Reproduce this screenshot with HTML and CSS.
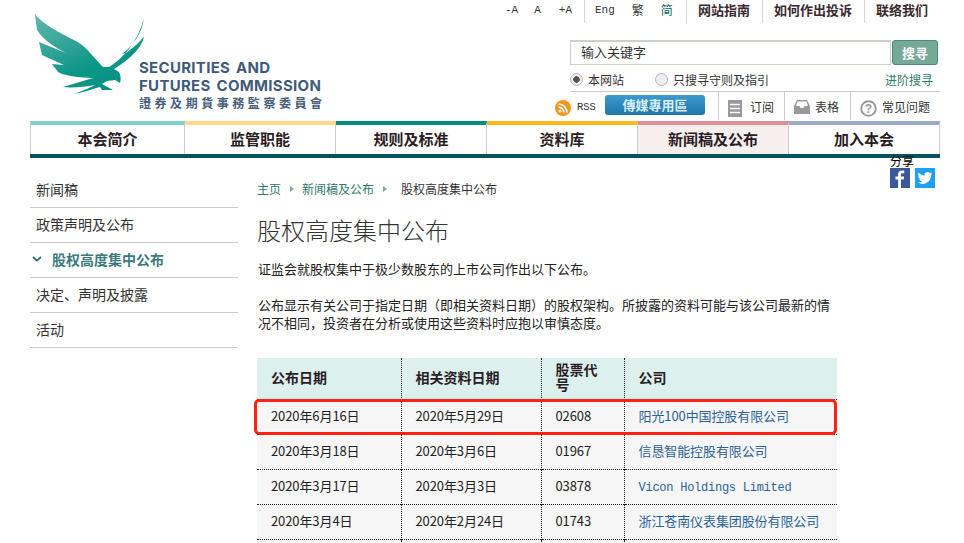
FILE: index.html
```html
<!DOCTYPE html>
<html lang="zh-CN">
<head>
<meta charset="utf-8">
<title>股权高度集中公布</title>
<link rel="stylesheet" href="styles.css">
</head>
<body>
<div class="page">
  <header class="header">
    <a class="logo">
      <svg class="eagle" width="115" height="85" viewBox="30 10 115 85">
        <defs>
          <linearGradient id="eg" x1="0.1" y1="0" x2="0.6" y2="0.9">
            <stop offset="0" stop-color="#5fb5ab"/>
            <stop offset="0.75" stop-color="#0c9686"/>
            <stop offset="1" stop-color="#079384"/>
          </linearGradient>
        </defs>
        <path fill="url(#eg)" d="M35 14C42 24 60 33 76 41C87 47 94 58 103 67L109 67C122 59 137 44 144 18C142 33 134 45 122 54L126 53C133 48 140 42 144 36C143 46 131 59 114 69L119 72C121 76 121 79 120 83L115 80L107 81L102 84L113 90L102 90L100 87C90 90 84 92 74 94C82 91 90 88 95 85C84 87 72 88 63 87L93 78C80 78 62 75 58 72L52 64L64 65C56 61 48 58 42 55L39 42L66 53C52 46 42 38 37 30Z"/>
      </svg>
      <span class="logo-text">
        <span class="logo-en">SECURITIES AND<br>FUTURES COMMISSION</span>
        <span class="logo-zh">證券及期貨事務監察委員會</span>
      </span>
    </a>
    <div class="head-right">
      <nav class="util">
        <div class="util-group sizes"><a>-A</a><a>A</a><a>+A</a></div>
        <div class="util-group langs"><a>Eng</a><a>繁</a><a class="cur">简</a></div>
        <a class="util-link">网站指南</a>
        <a class="util-link">如何作出投诉</a>
        <a class="util-link">联络我们</a>
      </nav>
      <div class="search">
        <div class="search-input">输入关键字</div>
        <button class="search-btn">搜寻</button>
      </div>
      <div class="options">
        <span class="radio on"></span><span class="opt opt-a">本网站</span>
        <span class="radio"></span><span class="opt">只搜寻守则及指引</span>
        <a class="adv">进阶搜寻</a>
      </div>
      <div class="tools">
        <svg class="rss" width="16" height="16" viewBox="0 0 16 16"><circle cx="8" cy="8" r="8" fill="#f7941e"/><circle cx="5" cy="11" r="1.5" fill="#fff"/><path d="M3.5 7.2a5.3 5.3 0 0 1 5.3 5.3M3.5 4a8.5 8.5 0 0 1 8.5 8.5" fill="none" stroke="#fff" stroke-width="1.7"/></svg>
        <span class="rss-text">RSS</span>
        <a class="media">傳媒專用區</a>
        <a class="tool t1"><svg width="14" height="17" viewBox="0 0 14 17"><rect width="14" height="17" fill="#999"/><path d="M2 4.5h10M2 8.5h10M2 12.5h10" stroke="#fff" stroke-width="1.3"/></svg><span>订阅</span></a>
        <a class="tool t2"><svg width="16" height="14" viewBox="0 0 16 14"><path d="M3 0h10l3 6v8H0V6z" fill="#999"/><path d="M3.5 1.5h9L14 6h-3.5l-1 2h-3l-1-2H2z" fill="#fff"/></svg><span>表格</span></a>
        <a class="tool t3"><svg width="17" height="17" viewBox="0 0 17 17"><circle cx="8.5" cy="8.5" r="7.3" fill="none" stroke="#999" stroke-width="2"/><text x="8.5" y="12.6" class="qm">?</text></svg><span>常见问题</span></a>
      </div>
    </div>
  </header>

  <nav class="mainnav">
    <a class="c1">本会简介</a>
    <a class="c2">监管职能</a>
    <a class="c3">规则及标准</a>
    <a class="c4">资料库</a>
    <a class="c5 cur">新闻稿及公布</a>
    <a class="c6">加入本会</a>
  </nav>

  <div class="share">
    <div class="share-label">分享</div>
    <div class="share-icons">
      <svg width="20" height="20" viewBox="0 0 20 20"><rect width="20" height="20" fill="#3b5998"/><path d="M11 20v-8.500h2.700l.4-3H11V6.700c0-.9.3-1.400 1.500-1.400h1.700V2.600c-.4 0-1.300-.1-2.300-.1-2.300 0-3.800 1.400-3.800 3.900v2.100H5.500v3h2.600V20z" fill="#fff"/></svg>
      <svg width="20" height="20" viewBox="0 0 20 20"><rect width="20" height="20" fill="#1da1f2"/><path d="M17 5.300c-.5.200-1.100.4-1.700.5.600-.4 1-.9 1.300-1.600-.6.300-1.200.6-1.900.7a3 3 0 0 0-5.100 2.700C7.200 7.500 5 6.300 3.600 4.500c-.8 1.400-.4 3.100.9 4-.5 0-.9-.1-1.300-.4 0 1.400 1 2.700 2.400 3-.4.100-.9.100-1.300 0 .4 1.200 1.500 2 2.800 2.100A6 6 0 0 1 3 14.500 8.500 8.500 0 0 0 16.100 7c.4-.5.700-1.100.9-1.700z" fill="#fff"/></svg>
    </div>
  </div>

  <div class="content">
    <aside class="side">
      <a>新闻稿</a>
      <a>政策声明及公布</a>
      <a class="active"><svg class="chev" width="10" height="6" viewBox="0 0 10 6"><path d="M1 1l4 3.500L9 1" fill="none" stroke="#2f7471" stroke-width="1.800"/></svg>股权高度集中公布</a>
      <a>决定、声明及披露</a>
      <a>活动</a>
    </aside>
    <main class="main">
      <div class="crumbs">
        <a>主页</a><i class="tri"></i><a>新闻稿及公布</a><i class="tri t-last"></i><span>股权高度集中公布</span>
      </div>
      <h1>股权高度集中公布</h1>
      <p class="p1">证监会就股权集中于极少数股东的上市公司作出以下公布。</p>
      <p class="p2">公布显示有关公司于指定日期（即相关资料日期）的股权架构。所披露的资料可能与该公司最新的情况不相同，投资者在分析或使用这些资料时应抱以审慎态度。</p>
      <div class="table-wrap">
        <table>
          <thead>
            <tr><th class="w1">公布日期</th><th class="w2">相关资料日期</th><th class="w3">股票代号</th><th>公司</th></tr>
          </thead>
          <tbody>
            <tr><td>2020年6月16日</td><td>2020年5月29日</td><td>02608</td><td><a>阳光100中国控股有限公司</a></td></tr>
            <tr><td>2020年3月18日</td><td>2020年3月6日</td><td>01967</td><td><a>信恳智能控股有限公司</a></td></tr>
            <tr><td>2020年3月17日</td><td>2020年3月3日</td><td>03878</td><td><a class="mono">Vicon Holdings Limited</a></td></tr>
            <tr><td>2020年3月4日</td><td>2020年2月24日</td><td>01743</td><td><a>浙江苍南仪表集团股份有限公司</a></td></tr>
            <tr><td>&nbsp;</td><td></td><td></td><td></td></tr>
          </tbody>
        </table>
        <div class="redbox"></div>
      </div>
    </main>
  </div>
</div>
</body>
</html>
```
FILE: styles.css
```css
* { box-sizing: border-box; }
html { overflow: hidden; height: 543px; }
body {
  margin: 0;
  height: 543px;
  overflow: hidden;
  background: #fff;
  color: #222;
  font-family: "Noto Sans CJK SC", "Liberation Sans", sans-serif;
  font-size: 13px;
}
.page { width: 910px; margin-left: 30px; position: relative; }

/* header */
.header { display: flex; justify-content: space-between; height: 121px; }
.logo { display: flex; align-items: flex-start; padding: 10px 0 0 0; }
.eagle { display: block; flex: none; }
.logo-text { display: flex; flex-direction: column; margin: 49px 0 0 -6px; }
.logo-en {
  font-family: "Inter", "Liberation Sans", sans-serif;
  font-weight: 700;
  font-size: 15px;
  line-height: 17.5px;
  color: #3f5b7a;
  letter-spacing: 0.3px;
  word-spacing: 2px;
  white-space: nowrap;
}
.logo-zh {
  font-family: "Noto Sans CJK TC", sans-serif;
  font-weight: 700;
  font-size: 12px;
  line-height: 14px;
  letter-spacing: 3.55px;
  color: #46607c;
  margin-top: 2px;
  white-space: nowrap;
}
.head-right { width: 450px; flex: none; display: flex; flex-direction: column; align-items: flex-end; }

.util { display: flex; width: 450px; height: 24px; align-items: flex-start; line-height: 20px; font-size: 12px; color: #333; white-space: nowrap; }
.util-group { display: flex; flex: none; height: 23px; border-right: 1px solid #d6d6d6; }
.sizes { width: 95px; font-family: "Liberation Mono", monospace; font-size: 11px; }
.sizes a:nth-child(1) { margin: 0 0 0 15px; }
.sizes a:nth-child(2) { margin-left: 16px; }
.sizes a:nth-child(3) { margin-left: 18px; }
.langs { width: 102px; }
.langs a:nth-child(1) { margin-left: 10px; font-family: "Liberation Mono", monospace; font-size: 11px; }
.langs a:nth-child(2) { margin-left: 17px; }
.langs a:nth-child(3) { margin-left: 17px; }
.langs .cur { color: #0b6b66; }
.util-link {
  flex: none;
  height: 23px;
  padding: 0 12px 0 11px;
  font-weight: 700;
  font-size: 13px;
  color: #3a2a30;
  border-right: 1px solid #d6d6d6;
}
.util-link:last-child { border-right: 0; padding-right: 0; }

.search { width: 370px; display: flex; margin-top: 16px; height: 25px; gap: 1px; padding-right: 2px; }
.search-input {
  flex: 1;
  border: 1px solid #c8d2c6;
  border-top-width: 2px;
  padding-left: 10px;
  line-height: 20px;
  font-size: 13px;
  color: #333;
}
.search-btn {
  width: 46px;
  height: 25px;
  padding: 0;
  border: 1px solid #4e8a78;
  border-radius: 3px;
  background: #76a996;
  color: #fff;
  font: 700 13px "Noto Sans CJK SC", sans-serif;
}

.options {
  width: 370px;
  height: 27px;
  padding-top: 5px;
  display: flex;
  align-items: flex-start;
  border-bottom: 1px solid #ccc;
  line-height: 20px;
  font-size: 12px;
  color: #333;
}
.radio {
  width: 13px;
  height: 13px;
  margin: 3px 5px 0 0;
  border-radius: 50%;
  border: 1px solid #b5b5b5;
  background: #eee;
  flex: none;
}
.radio.on { background: radial-gradient(circle, #555 0 3px, #eee 3.5px); }
.opt-a { width: 67px; }
.adv { margin-left: auto; margin-right: 7px; color: #2f7a6c; }

.tools { width: 385px; height: 28px; display: flex; align-items: flex-start; }
.rss { margin-top: 8px; flex: none; }
.rss-text { margin: 5px 0 0 6px; font-family: "Liberation Mono", monospace; font-size: 10.5px; line-height: 20px; width: 28px; color: #333; }
.media {
  width: 100px;
  height: 20px;
  margin-top: 3px;
  border-radius: 3px;
  background: linear-gradient(#3d9bd0, #1f76a5);
  color: #d9eef8;
  text-align: center;
  font-weight: 700;
  font-size: 13px;
  line-height: 19px;
}
.tool { height: 28px; display: flex; align-items: flex-start; border-left: 1px solid #ccc; color: #333; font-size: 12px; line-height: 20px; }
.tool span { padding-top: 5px; }
.t1 { margin-left: 13px; width: 66px; padding-left: 9px; gap: 8px; }
.t1 svg { margin-top: 8px; }
.t2 { width: 66px; padding-left: 9px; gap: 5px; }
.t2 svg { margin-top: 8px; }
.t3 { flex: 1; padding-left: 9px; gap: 5px; }
.t3 svg { margin-top: 8px; }
.qm { font: 700 12px "Liberation Sans", sans-serif; fill: #999; text-anchor: middle; }

/* main nav */
.mainnav { display: flex; height: 37px; border-bottom: 4px solid #00545a; }
.mainnav a {
  flex: 0 0 151px;
  height: 33px;
  border-top: 4px solid #ccc;
  border-right: 1px solid #ccc;
  text-align: center;
  font-weight: 700;
  font-size: 15px;
  line-height: 27px;
  color: #2a1c24;
}
.mainnav a:first-child { flex-basis: 155px; border-left: 1px solid #ccc; }
.c1 { border-top-color: #7cd2c8 !important; }
.c2 { border-top-color: #ffd98a !important; }
.c3 { border-top-color: #008b80 !important; }
.c4 { border-top-color: #fdb71a !important; }
.c5 { border-top-color: #dc8f98 !important; }
.c6 { border-top-color: #9aaac8 !important; }
.mainnav .cur { background: #f7efee; }

/* share */
.share { position: absolute; left: 860px; top: 154px; color: #000; }
.share-label { font-size: 12px; line-height: 14px; }
.share-icons { display: flex; gap: 5px; }
.share-icons svg { display: block; }

/* content */
.content { display: flex; gap: 19px; padding-top: 15px; }
.side { width: 208px; flex: none; }
.side a {
  display: flex;
  align-items: center;
  height: 35px;
  padding: 0 0 2px 6px;
  border-bottom: 1px solid #ccc;
  font-size: 14px;
  color: #333;
}
.side .active { font-weight: 700; color: #3a7a7c; padding-left: 2px; }
.chev { margin-right: 10px; }

.main { width: 580px; flex: none; }
.crumbs { display: flex; align-items: center; height: 20px; margin-top: 5px; font-size: 12px; color: #333; }
.crumbs a { color: #2f7a6c; }
.tri {
  width: 0; height: 0;
  margin: 2px 8px 0 9px;
  border-left: 4px solid #7ea99a;
  border-top: 3px solid transparent;
  border-bottom: 3px solid transparent;
}
.crumbs .t-last { margin-right: 14px; }
h1 { margin: 14px 0 0 0; font-size: 24px; font-weight: 300; line-height: 36px; color: #333; }
.p1, .p2 { margin: 0; font-size: 13px; line-height: 18px; padding-left: 1px; color: #222; }
.p1 { margin-top: 12px; }
.p2 { margin-top: 18px; width: 580px; }

.table-wrap { position: relative; margin-top: 26px; }
table { width: 580px; border-collapse: collapse; table-layout: fixed; font-size: 13px; color: #222; }
th {
  background: #dcf0ee;
  height: 41px;
  padding: 0 14px 2px;
  text-align: left;
  font-weight: 700;
  font-size: 14px;
  line-height: 15px;
  color: #2a1c24;
  border-left: 1px dotted #222;
}
td {
  background: #f6f6f6;
  height: 35px;
  padding: 0 14px 2px;
  border-left: 1px dotted #222;
  border-top: 1px dotted #222;
  letter-spacing: -0.1px;
}
th:first-child, td:first-child { border-left: 0; }
.w1 { width: 144px; }
.w2 { width: 140px; }
.w3 { width: 83px; }
td a { color: #2b6296; }
td .mono { font-family: "Liberation Mono", monospace; font-size: 12px; letter-spacing: -0.25px; }
.redbox {
  position: absolute;
  left: -3px;
  top: 41px;
  width: 583px;
  height: 36px;
  border: 3px solid #ff2212;
  border-radius: 5px;
}
```
